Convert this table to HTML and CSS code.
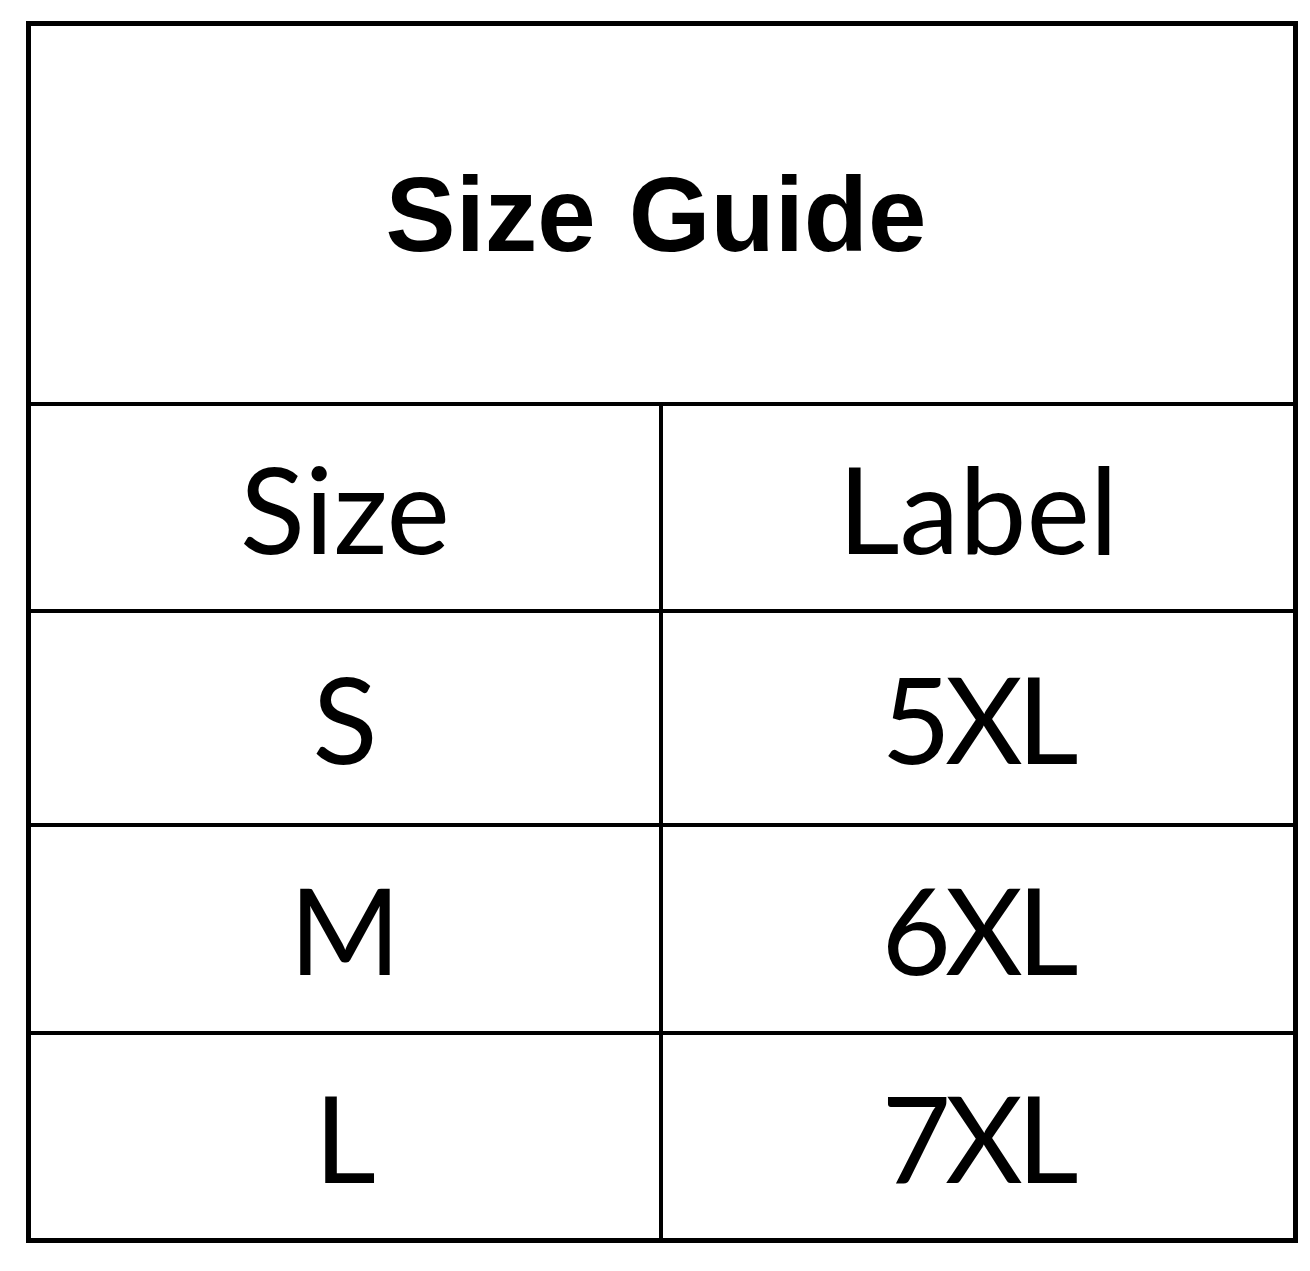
FILE: index.html
```html
<!DOCTYPE html>
<html lang="en">
<head>
<meta charset="utf-8">
<title>Size Guide</title>
<link rel="stylesheet" href="styles.css">
</head>
<body>
<div class="guide">
  <div class="cell title">Size Guide</div>
  <div class="cell head">Size</div>
  <div class="cell head">Label</div>
  <div class="cell">S</div>
  <div class="cell label">5XL</div>
  <div class="cell">M</div>
  <div class="cell label">6XL</div>
  <div class="cell">L</div>
  <div class="cell label">7XL</div>
</div>
</body>
</html>
```
FILE: styles.css
```css
html, body {
  margin: 0;
  padding: 0;
  background: #ffffff;
}

body {
  width: 1310px;
  height: 1271px;
  overflow: hidden;
}

.guide {
  box-sizing: border-box;
  margin: 21px 0 0 26px;
  width: 1272px;
  height: 1222px;
  border: 5px solid #000;
  background: #000;
  display: grid;
  grid-template-columns: 628px 630px;
  grid-template-rows: 376px 203px 210px 204px 203px;
  gap: 4px;
}

.cell {
  background: #fff;
  display: flex;
  align-items: center;
  justify-content: center;
  color: #000;
  font-family: "Lato", "Liberation Sans", sans-serif;
  font-size: 120px;
  line-height: 1;
}

.head {
  padding-top: 0;
}

.label {
  letter-spacing: -6px;
  padding-right: 2px;
}

.title {
  grid-column: 1 / 3;
  padding-right: 12px;
  word-spacing: 4px;
  font-family: "Liberation Sans", Arial, sans-serif;
  font-weight: bold;
  font-size: 105px;
}
```
